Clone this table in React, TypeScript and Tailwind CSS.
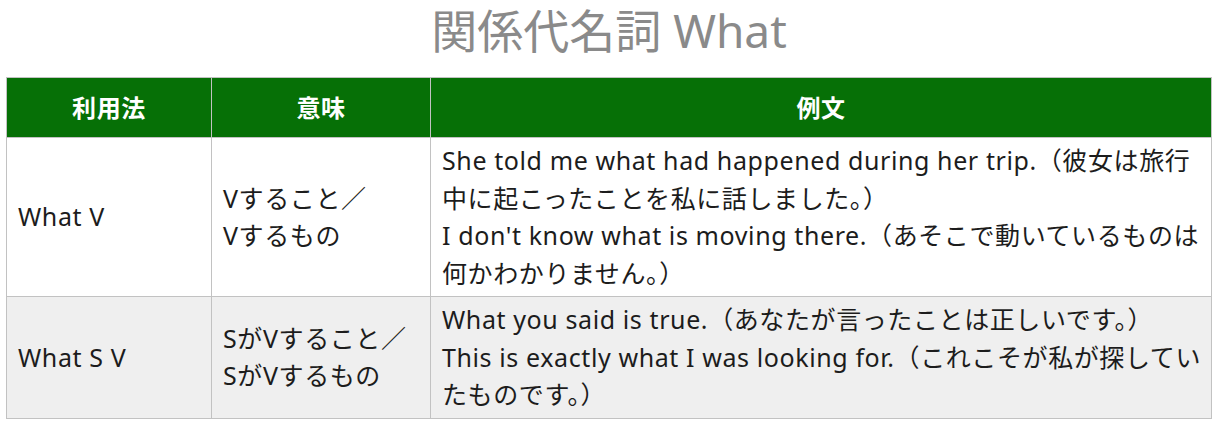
import React from "react";

const font = { fontFamily: '"Noto Sans", "Noto Sans CJK JP", sans-serif' };

export default function App() {
  return (
    <div className="w-[1218px] h-[426px] bg-white overflow-hidden" style={font}>
      <div className="h-[77px] flex justify-center items-start">
        <div className="text-[46px] leading-[60px] text-[#8a8a8a]">関係代名詞 What</div>
      </div>
      <table className="ml-[6px] w-[1205px] border-collapse table-fixed text-[25px] leading-[37.5px] text-[#1c1c1c] tracking-[0.6px]">
        <colgroup>
          <col className="w-[205px]" />
          <col className="w-[219px]" />
          <col className="w-[781px]" />
        </colgroup>
        <thead>
          <tr className="h-[60px] bg-[#067006] text-white font-bold text-[24px]">
            <th className="border border-[#c2c2c2] text-center align-middle">利用法</th>
            <th className="border border-[#c2c2c2] text-center align-middle">意味</th>
            <th className="border border-[#c2c2c2] text-center align-middle">例文</th>
          </tr>
        </thead>
        <tbody>
          <tr className="h-[158px] bg-white">
            <td className="border border-[#c2c2c2] pl-[11px] align-middle whitespace-nowrap">What V</td>
            <td className="border border-[#c2c2c2] pl-[11px] align-middle whitespace-nowrap">
              Vすること／<br />Vするもの
            </td>
            <td className="border border-[#c2c2c2] pl-[11px] py-[4px] align-middle whitespace-nowrap">
              She told me what had happened during her trip.（彼女は旅行<br />
              中に起こったことを私に話しました。）<br />
              I don't know what is moving there.（あそこで動いているものは<br />
              何かわかりません。）
            </td>
          </tr>
          <tr className="h-[120px] bg-[#efefef]">
            <td className="border border-[#c2c2c2] pl-[11px] align-middle whitespace-nowrap">What S V</td>
            <td className="border border-[#c2c2c2] pl-[11px] align-middle whitespace-nowrap">
              SがVすること／<br />SがVするもの
            </td>
            <td className="border border-[#c2c2c2] pl-[11px] py-[4px] align-middle whitespace-nowrap">
              What you said is true.（あなたが言ったことは正しいです。）<br />
              This is exactly what I was looking for.（これこそが私が探してい<br />
              たものです。）
            </td>
          </tr>
        </tbody>
      </table>
    </div>
  );
}
